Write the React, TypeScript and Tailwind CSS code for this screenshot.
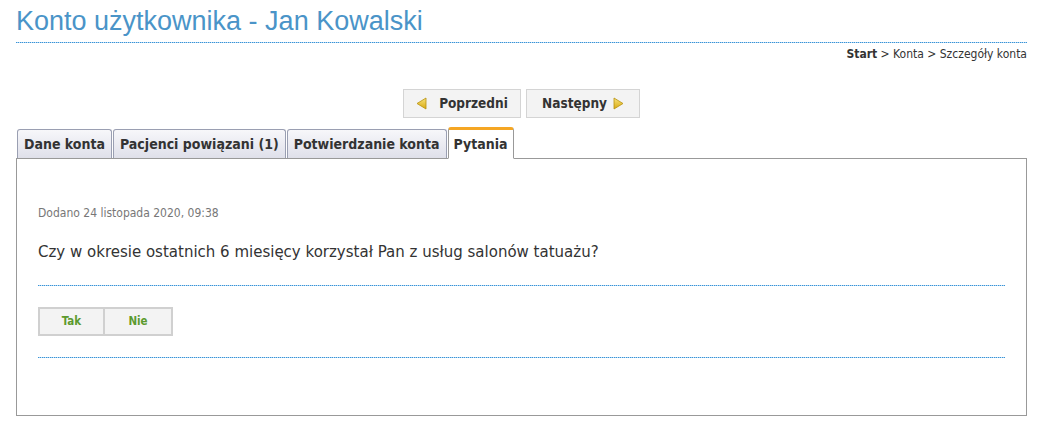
const font = { fontFamily: '"DejaVu Sans Condensed", "DejaVu Sans", sans-serif' };

const tabs = [
    { label: 'Dane konta', active: false },
    { label: 'Pacjenci powiązani (1)', active: false },
    { label: 'Potwierdzanie konta', active: false },
    { label: 'Pytania', active: true },
];

const Arrow = ({ dir }: { dir: 'left' | 'right' }) => (
    <svg width="11" height="13" viewBox="0 0 11 13">
        <defs>
            <linearGradient id={`g-${dir}`} x1="0" y1="0" x2="0" y2="1">
                <stop offset="0" stopColor="#f6e27a" />
                <stop offset="1" stopColor="#d9a911" />
            </linearGradient>
        </defs>
        {dir === 'left' ? (
            <path d="M10 1 L1 6.5 L10 12 Z" fill={`url(#g-${dir})`} stroke="#b8900e" strokeWidth="0.8" />
        ) : (
            <path d="M1 1 L10 6.5 L1 12 Z" fill={`url(#g-${dir})`} stroke="#b8900e" strokeWidth="0.8" />
        )}
    </svg>
);

// dotted blue rule
const Dotted = () => (
    <div className="h-px bg-[#8cc3ec] bg-[repeating-linear-gradient(90deg,#3a93d6_0_1px,#9fcdf0_1px_2px,#3a93d6_2px_3px,#c9e3f6_3px_4px)]" />
);

export default function App() {
    return (
        <div className="w-[1043px] h-[430px] bg-white px-4 pt-[5px]" style={font}>
            <h1
                className="text-[27px] leading-[33px] text-[#4a94c8] pb-1"
                style={{ fontFamily: '"Liberation Sans", Arial, sans-serif' }}
            >
                Konto użytkownika - Jan Kowalski
            </h1>
            <Dotted />
            <div className="text-right text-[12px] leading-[16px] text-[#333] mt-[3px]">
                <span className="font-bold">Start</span> &gt; Konta &gt; Szczegóły konta
            </div>

            {/* Prev / next */}
            <div className="flex justify-center gap-[5px] mt-[27px]">
                <button className="h-[29px] w-[118px] flex items-center justify-center gap-[12px] bg-[#f3f3f3] border border-[#d4d4d4] text-[13.5px] font-bold text-[#333]">
                    <Arrow dir="left" />
                    Poprzedni
                </button>
                <button className="h-[29px] w-[114px] flex items-center justify-center gap-[6px] bg-[#f3f3f3] border border-[#d4d4d4] text-[13.5px] font-bold text-[#333]">
                    Następny
                    <Arrow dir="right" />
                </button>
            </div>

            {/* Tabs */}
            <div className="flex items-end gap-[1px] mt-[9px] pl-px relative z-10 h-[32px]">
                {tabs.map((t) =>
                    t.active ? (
                        <div
                            key={t.label}
                            className="h-[32px] px-[5px] flex items-center bg-white border border-[#999] border-b-white border-t-[3px] border-t-[#f5a623] rounded-t-[3px] text-[14px] font-bold text-[#333]"
                        >
                            {t.label}
                        </div>
                    ) : (
                        <div
                            key={t.label}
                            className="h-[29px] mb-px px-[6px] flex items-center bg-gradient-to-b from-[#f7f7fa] to-[#dfe0ea] border border-[#9a9fb2] border-b-0 rounded-t-[3px] text-[14px] font-bold text-[#333]"
                        >
                            {t.label}
                        </div>
                    )
                )}
            </div>

            {/* Panel */}
            <div className="border border-[#999] -mt-px h-[258px] px-[21px] pt-[46px]">
                <div className="h-4 text-[12px] text-[#777] leading-[16px]">Dodano 24 listopada 2020, 09:38</div>
                <div
                    className="h-5 text-[15px] text-[#333] leading-[20px] mt-[21px]"
                    style={{ fontFamily: '"DejaVu Sans", sans-serif' }}
                >
                    Czy w okresie ostatnich 6 miesięcy korzystał Pan z usług salonów tatuażu?
                </div>
                <div className="mt-[23px]">
                    <Dotted />
                </div>
                <div className="flex mt-[21px]">
                    <button className="h-[29px] w-[67px] bg-[#f3f3f3] border-2 border-[#d0d0d0] text-[11.5px] font-bold text-[#5c9a2e]">
                        Tak
                    </button>
                    <button className="h-[29px] w-[68px] bg-[#f3f3f3] border-2 border-l-0 border-[#d0d0d0] text-[11.5px] font-bold text-[#5c9a2e]">
                        Nie
                    </button>
                </div>
                <div className="mt-[21px]">
                    <Dotted />
                </div>
            </div>
        </div>
    );
}
